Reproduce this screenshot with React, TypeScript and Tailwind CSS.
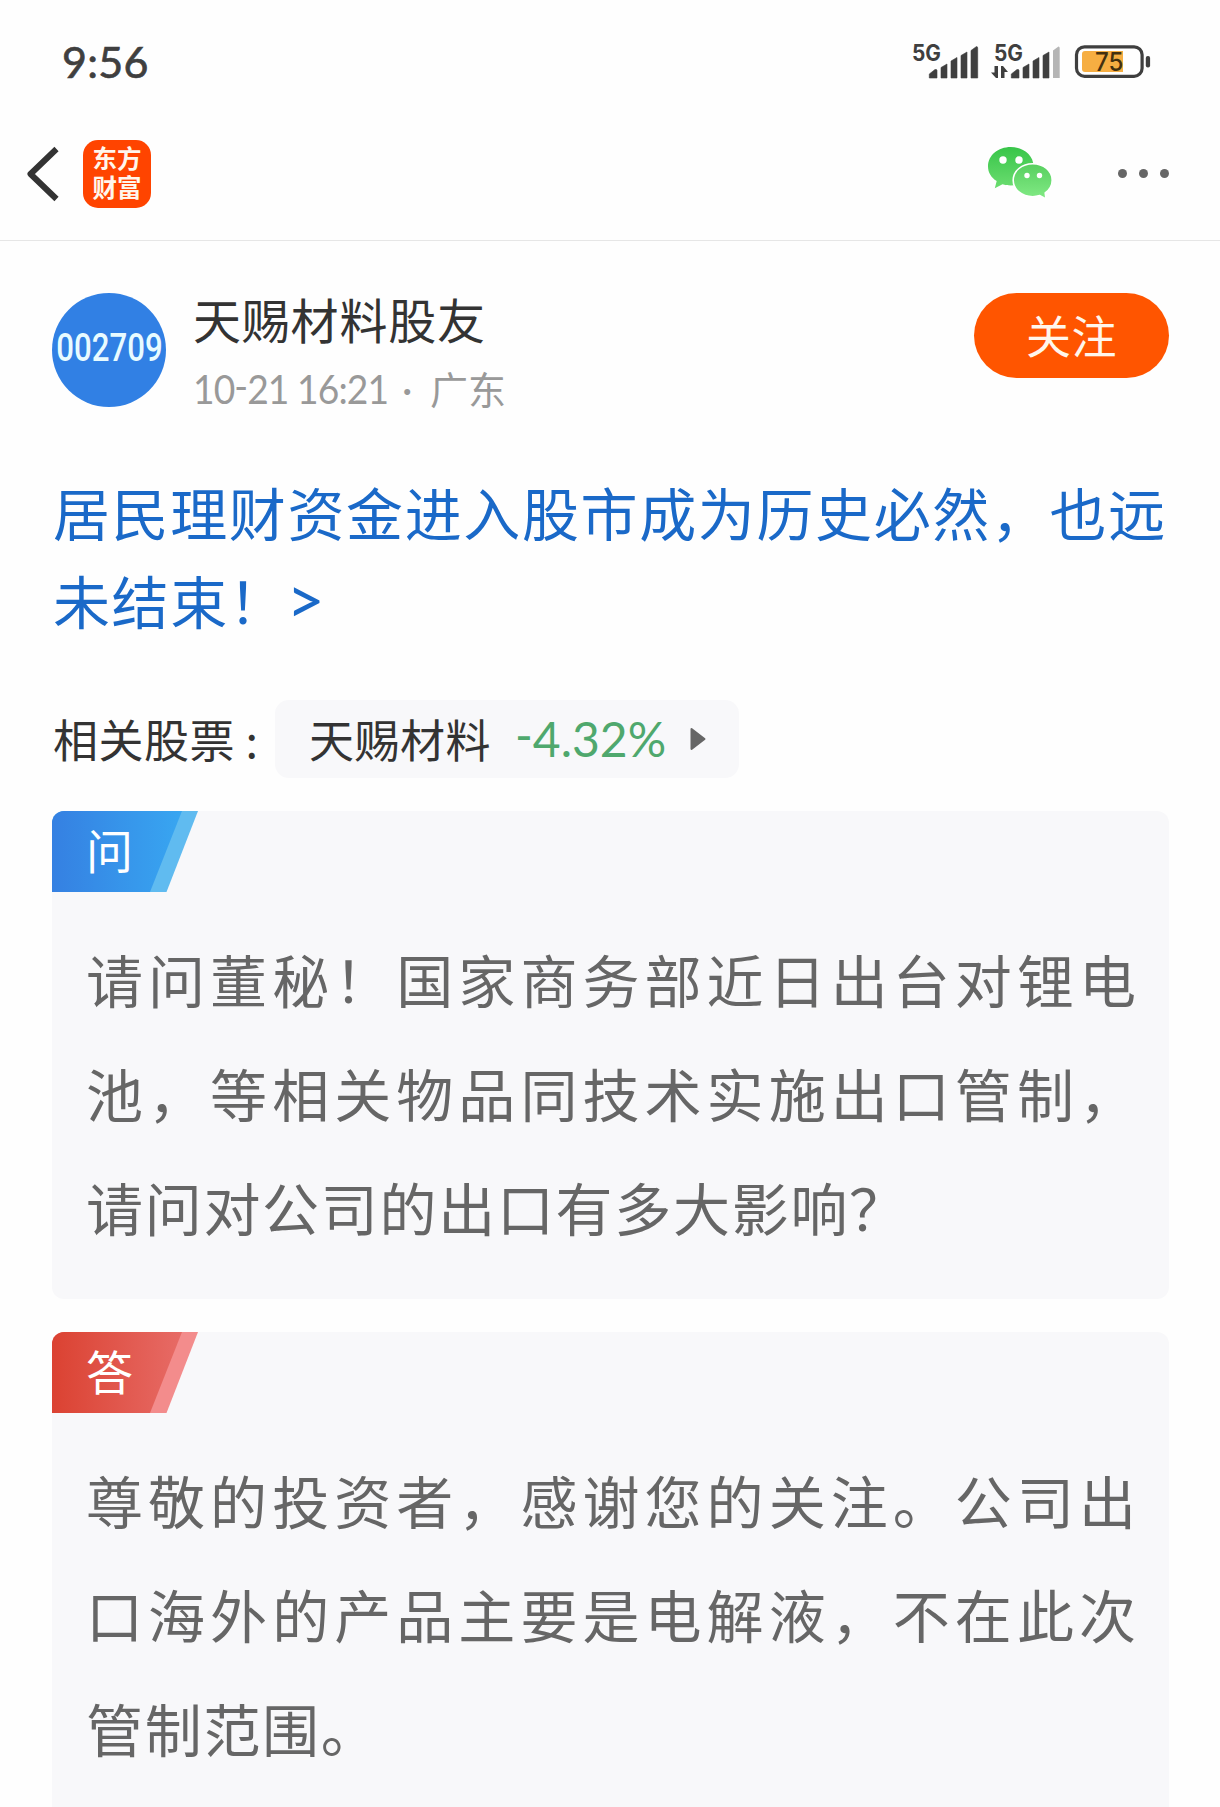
import React from "react";

const cjk = "font-['Noto_Sans_CJK_SC',sans-serif]";
const latin = "font-['Lato','Noto_Sans_CJK_SC',sans-serif]";

function StatusIcons() {
  return (
    <svg width="244" height="40" viewBox="0 0 244 40" className="mt-[2px] block overflow-visible" fill="#3f3f3f">
      <text x="2" y="18.500" fontFamily="Inter, sans-serif" fontWeight="700" fontSize="22.500" textLength="29" lengthAdjust="spacingAndGlyphs">5G</text>
      <path d="M19.300 36V32L25 27.500Q27 27 27 28.500V36zM31 36V25.500L37 22V36zM41 36V19L47 15.500V36zM51 36V13.500L57 10V36zM61 36V8.500L66.500 4.500Q67.700 4.500 67.700 6V36z" stroke="#3f3f3f" strokeWidth="0.6" strokeLinejoin="round" />
      <text x="84" y="18.500" fontFamily="Inter, sans-serif" fontWeight="700" fontSize="22.500" textLength="29" lengthAdjust="spacingAndGlyphs">5G</text>
      <path d="M84.500 24H88V36H86L81 30.500H84.500zM91 36V24H93L98 30H94.500V36z" />
      <path d="M101.300 36V32L107 27.500Q109 27 109 28.500V36zM113 36V25.500L119 22V36zM123 36V19L129 15.500V36zM133 36V13.500L139 10V36z" stroke="#3f3f3f" strokeWidth="0.6" strokeLinejoin="round" />
      <path d="M143 36V8.500L148.500 4.500Q149.700 4.500 149.700 6V36z" fill="#b5b5b5" />
      <rect x="166.500" y="4.800" width="65.600" height="29.500" rx="8" fill="#fff" stroke="#3f3f3f" strokeWidth="3.200" />
      <path d="M175 9H213V30H175Q172 30 172 27V12Q172 9 175 9z" fill="#f6ae42" />
      <rect x="235.800" y="14" width="4.300" height="11.500" rx="2" />
      <text x="185" y="29" fontFamily="Inter, sans-serif" fontWeight="500" fontSize="26" fill="#43300f" textLength="28.500" lengthAdjust="spacingAndGlyphs">75</text>
    </svg>
  );
}

function WeChatIcon() {
  return (
    <svg width="68" height="56" viewBox="0 0 68 56" className="block">
      <defs>
        <linearGradient id="wxBack" x1="0" y1="0" x2="0" y2="1">
          <stop offset="0" stopColor="#38c549" />
          <stop offset="1" stopColor="#6bdd70" />
        </linearGradient>
        <linearGradient id="wxFront" x1="0" y1="0" x2="0" y2="1">
          <stop offset="0" stopColor="#57cf5f" />
          <stop offset="1" stopColor="#82ea85" />
        </linearGradient>
      </defs>
      <path d="M25.700 1C38.300 1 48.500 9.300 48.500 20.200S38.300 39.400 25.700 39.400C22.500 39.400 20 39 17.500 38.200L9.800 42.200L11.700 35C6 31.500 3 26.300 3 20.200C3 9.300 13.200 1 25.700 1z" fill="url(#wxBack)" />
      <path d="M47.700 17.700C58.600 17.700 67.200 25 67.200 34.200C67.200 39.400 64.500 43.800 60.200 47L61 53L54.800 49.500C52.600 50.200 50.300 50.700 47.700 50.700C36.900 50.700 28.200 43.400 28.200 34.200S36.900 17.700 47.700 17.700z" fill="url(#wxFront)" stroke="#fff" strokeWidth="1.600" />
      <circle cx="18" cy="14" r="3.700" fill="#fff" />
      <circle cx="34" cy="14" r="3.700" fill="#fff" />
      <circle cx="42" cy="29.500" r="2.700" fill="#fff" />
      <circle cx="54.500" cy="29.500" r="2.700" fill="#fff" />
    </svg>
  );
}

type CardProps = {
  label: string;
  id: string;
  from: string;
  to: string;
  stripe: string;
  lines: string[];
  className: string;
};

function QaCard({ label, id, from, to, stripe, lines, className }: CardProps) {
  return (
    <section className={`overflow-hidden rounded-xl bg-[#f8f8fa] ${className}`}>
      <div className="relative h-[81px] w-[146px]">
        <svg width="146" height="81" viewBox="0 0 146 81" className="absolute inset-0">
          <defs>
            <linearGradient id={id} x1="0" y1="0" x2="1" y2="0">
              <stop offset="0" stopColor={from} />
              <stop offset="1" stopColor={to} />
            </linearGradient>
          </defs>
          <path d="M0 0H146L114.500 81H0z" fill={stripe} />
          <path d="M0 0H130L98 81H0z" fill={`url(#${id})`} />
        </svg>
        <span className="relative block pl-[34px] text-[47px] leading-[75px] text-white">{label}</span>
      </div>
      <div className="pt-[29px] pl-[34px] text-[57px] leading-[114px] whitespace-nowrap text-[#666]">
        {lines.map((line, i) => (
          <p key={line} className={i < lines.length - 1 ? "tracking-[5.060px]" : "tracking-[1.700px]"}>
            {line}
          </p>
        ))}
      </div>
    </section>
  );
}

export default function App() {
  return (
    <main className={`h-[1807px] w-[1220px] overflow-hidden bg-[#fefefe] ${cjk}`}>
      <div className="flex h-[108px] items-start justify-between pt-10 pr-[66px] pl-[62px]">
        <span className={`-mt-px text-[43px] leading-[46px] tracking-[0.300px] text-[#3f3f3f] [-webkit-text-stroke:0.7px_#3f3f3f] ${latin}`}>9:56</span>
        <StatusIcons />
      </div>

      <header className="flex h-[133px] items-center border-b border-[#e6e6e6] pr-[51px] pb-px pl-[25px]">
        <svg width="36" height="60" viewBox="0 0 36 60" className="block" fill="none" stroke="#333" strokeWidth="6">
          <path d="M31.500 5L5.500 30L31.500 55" strokeLinejoin="round" />
        </svg>
        <div className="ml-[22px] flex h-[68px] w-[68px] flex-col items-center justify-center rounded-[15px] bg-[#ff4400] pb-[4px] text-[24.500px] leading-[29px] font-bold text-[#fff6ec]">
          <span>东方</span>
          <span>财富</span>
        </div>
        <div className="ml-auto">
          <WeChatIcon />
        </div>
        <div className="ml-[65px] flex gap-3">
          <i className="size-[9px] rounded-full bg-[#666]" />
          <i className="size-[9px] rounded-full bg-[#666]" />
          <i className="size-[9px] rounded-full bg-[#666]" />
        </div>
      </header>

      <div className="pt-[52px] pr-[51px] pl-[52px]">
        <div className="flex items-start">
          <div className="flex size-[114px] items-center justify-center overflow-hidden rounded-full bg-[#3180e4] pb-[3px]">
            <span className="scale-x-[0.800] font-['Roboto',sans-serif] text-[39px] leading-none font-medium text-[#e8fbff]">002709</span>
          </div>
          <div className="-mt-[3px] pl-[27px]">
            <div className="text-[48px] leading-[56px] tracking-[0.800px] text-[#333]">天赐材料股友</div>
            <div className={`mt-[13px] flex text-[40px] leading-[60px] whitespace-nowrap text-[#999] ${latin}`}>
              <div className="w-[209px]">
                <span className="inline-block origin-left scale-x-[0.930] tracking-[-1px]">
                  10<span className="relative -top-[3px]">-</span>21 16:21
                </span>
              </div>
              <span className="w-[28px]">·</span>
              <span className="text-[38px]">广东</span>
            </div>
          </div>
          <button className="ml-auto h-[85px] w-[195px] rounded-full bg-[#ff5500] pb-[2px] text-[45px] tracking-[0.500px] text-[#fff6ec]">关注</button>
        </div>

        <h1 className="mt-[48px] flex flex-col pl-px text-[57px] leading-[88px] font-normal tracking-[1.620px] whitespace-nowrap text-[#1a69c8]">
          <span>居民理财资金进入股市成为历史必然，也远</span>
          <span className="flex">
            未结束！<span className={`-ml-px text-[66px] ${latin}`}>&gt;</span>
          </span>
        </h1>

        <div className="mt-[57px] flex h-[78px] items-center text-[45px] text-[#333]">
          <span className="w-[223px] pl-px tracking-[0.500px] whitespace-nowrap">相关股票 :</span>
          <div className="flex h-[78px] w-[464px] items-center rounded-[14px] bg-[#f8f8fa] pl-[34px]">
            <span className="tracking-[0.500px]">天赐材料</span>
            <span className={`ml-[24px] text-[48px] text-[#4fa86d] ${latin}`}>
              <span className="relative -top-1">-</span>4.32%
            </span>
            <svg width="16" height="24" viewBox="0 0 16 24" className="ml-auto mr-[33px]">
              <path d="M1.500 2L14.500 12L1.500 22z" fill="#666" stroke="#666" strokeWidth="2" strokeLinejoin="round" />
            </svg>
          </div>
        </div>

        <QaCard
          className="mt-[33px] h-[488px]"
          label="问"
          id="askTag"
          from="#3580e2"
          to="#38a6f1"
          stripe="#60bbf0"
          lines={["请问董秘！国家商务部近日出台对锂电", "池，等相关物品同技术实施出口管制，", "请问对公司的出口有多大影响？"]}
        />
        <QaCard
          className="mt-[33px] h-[520px]"
          label="答"
          id="answerTag"
          from="#db4232"
          to="#e76b66"
          stripe="#f38c8c"
          lines={["尊敬的投资者，感谢您的关注。公司出", "口海外的产品主要是电解液，不在此次", "管制范围。"]}
        />
      </div>
    </main>
  );
}
